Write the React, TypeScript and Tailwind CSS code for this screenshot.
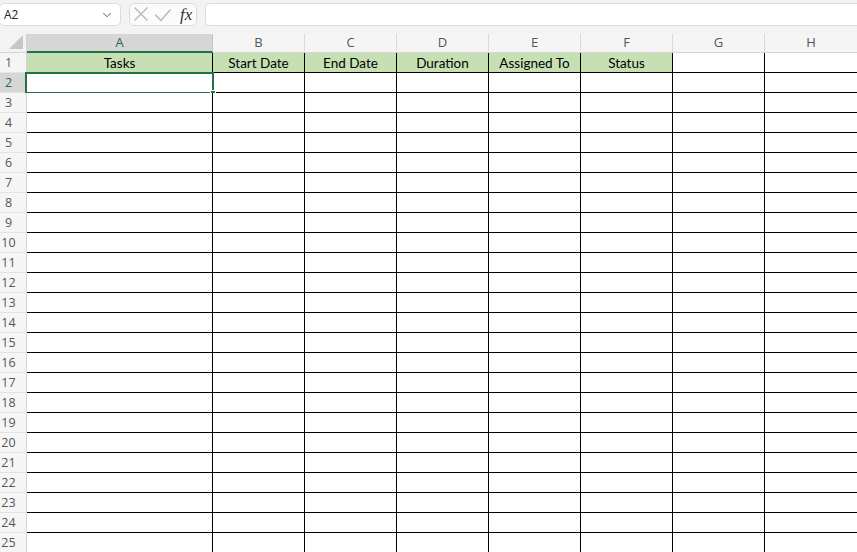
import React from "react";
import { ChevronDown } from "lucide-react";

const columns = [
  { key: "A", width: "w-[186px]", title: "Tasks" },
  { key: "B", width: "w-[92px]", title: "Start Date" },
  { key: "C", width: "w-[92px]", title: "End Date" },
  { key: "D", width: "w-[92px]", title: "Duration" },
  { key: "E", width: "w-[92px]", title: "Assigned To" },
  { key: "F", width: "w-[92px]", title: "Status" },
  { key: "G", width: "w-[92px]", title: "" },
  { key: "H", width: "w-[93px]", title: "" },
];

const rowNums = Array.from({ length: 24 }, (_, i) => i + 2);

const uiFont = { fontFamily: '"Open Sans", "Noto Sans", sans-serif' };
const cellFont = { fontFamily: 'Lato, "Open Sans", sans-serif' };

const RowHead: React.FC<{ n: number; active?: boolean }> = ({ n, active }) => (
  <div
    className={`w-[27px] h-[20px] shrink-0 border-r border-b border-r-[#d4d4d4] border-b-[#e3e3e3] flex items-center ${
      active ? "bg-[#d6d6d6] text-[#1f6b41]" : "bg-[#f5f5f5] text-[#555]"
    }`}
  >
    <span className="w-[17px] text-center text-[12.5px] leading-none pt-[1px]">{n}</span>
  </div>
);

const App: React.FC = () => {
  return (
    <div
      className="w-[857px] h-[552px] overflow-hidden bg-[#f3f3f3] select-none"
      style={uiFont}
    >
      {/* formula bar */}
      <div className="h-[34px] flex items-start pt-[3px]">
        <div className="w-[122px] h-[23px] -ml-[1px] bg-white border border-[#dcdcdc] rounded-[5px] flex items-center justify-between pl-[4px] pr-[6px]">
          <span className="text-[12px] text-[#222]">A2</span>
          <ChevronDown size={14} strokeWidth={1.5} className="text-[#444]" />
        </div>
        <div className="ml-[8px] w-[68px] h-[23px] bg-[#fbfbfb] border border-[#dcdcdc] rounded-[5px] flex items-center">
          <svg width="44" height="21" viewBox="0 0 44 21" className="shrink-0">
            <path d="M4.5 3.5 L17.5 16.5 M17.5 3.5 L4.5 16.5" stroke="#b3b3b3" strokeWidth="1.2" fill="none" />
            <path d="M25 10.5 L31 16.5 L40.5 5.5" stroke="#b3b3b3" strokeWidth="1.2" fill="none" />
          </svg>
          <span
            className="ml-[6px] text-[17px] italic text-[#333] leading-none"
            style={{ fontFamily: '"Liberation Serif", serif' }}
          >
            fx
          </span>
        </div>
        <div className="ml-[8px] flex-1 h-[23px] bg-white border border-[#dcdcdc] rounded-l-[5px] border-r-0" />
      </div>

      {/* column headers */}
      <div className="flex h-[19px]">
        <div className="w-[27px] shrink-0 border-r border-b border-[#d4d4d4] bg-[#f3f3f3] relative">
          <svg width="14" height="14" className="absolute right-[3px] bottom-[3px]">
            <polygon points="14,0 14,14 0,14" fill="#c6c6c6" />
          </svg>
        </div>
        {columns.map((c) =>
          c.key === "A" ? (
            <div
              key={c.key}
              className={`${c.width} shrink-0 bg-[#d6d6d6] border-r border-[#c4c4c4] border-b-2 border-b-[#217346] flex items-center justify-center text-[13px] text-[#1f6b41]`}
            >
              {c.key}
            </div>
          ) : (
            <div
              key={c.key}
              className={`${c.width} shrink-0 bg-[#f5f5f5] border-r border-b border-r-[#dadada] border-b-[#d4d4d4] flex items-center justify-center text-[13px] text-[#555]`}
            >
              {c.key}
            </div>
          )
        )}
      </div>

      {/* row 1 - table header */}
      <div className="flex h-[20px]">
        <RowHead n={1} />
        {columns.map((c) => (
          <div
            key={c.key}
            className={`${c.width} shrink-0 h-[20px] border-b border-r border-black ${
              c.title ? "bg-[#c6e0b4]" : "bg-white"
            } flex items-center justify-center pt-[2px] text-[13.5px] text-black`}
            style={cellFont}
          >
            {c.title}
          </div>
        ))}
      </div>

      {/* data rows */}
      {rowNums.map((n) => (
        <div key={n} className="flex h-[20px] relative">
          <RowHead n={n} active={n === 2} />
          {columns.map((c) => (
            <div
              key={c.key}
              className={`${c.width} shrink-0 h-[20px] bg-white border-r border-b border-black`}
            />
          ))}
          {n === 2 && (
            <div className="absolute left-[25px] top-[-1px] w-[189px] h-[22px] border-2 border-[#217346] pointer-events-none">
              <div className="absolute -right-[4px] -bottom-[4px] w-[6px] h-[6px] bg-[#217346] border border-white" />
            </div>
          )}
        </div>
      ))}
    </div>
  );
};

export default App;
